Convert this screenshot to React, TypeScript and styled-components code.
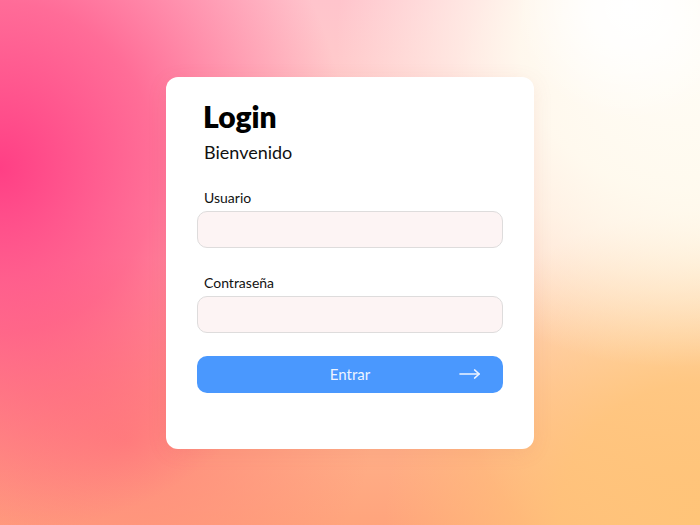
import React from 'react'
import styled, { createGlobalStyle } from 'styled-components'

const GlobalStyle = createGlobalStyle`
  html, body {
    margin: 0;
    padding: 0;
  }
  body {
    font-family: Lato, "Open Sans", sans-serif;
  }
`

export default function App() {
    return (
        <>
            <GlobalStyle />
            <Page>
                <Card>
                    <Title>Login</Title>
                    <Subtitle>Bienvenido</Subtitle>
                    <Form onSubmit={(e) => e.preventDefault()}>
                        <Field>
                            <Label htmlFor="usuario">Usuario</Label>
                            <Input id="usuario" type="text" />
                        </Field>
                        <Field>
                            <Label htmlFor="password">Contraseña</Label>
                            <Input id="password" type="password" />
                        </Field>
                        <Button type="submit">
                            <span>Entrar</span>
                            <Arrow viewBox="0 0 24 12" fill="none" stroke="currentColor" strokeWidth="1.6" strokeLinecap="round" strokeLinejoin="round">
                                <path d="M1 6h21" />
                                <path d="M17 1.5L22 6l-5 4.5" />
                            </Arrow>
                        </Button>
                    </Form>
                </Card>
            </Page>
        </>
    )
}

const Page = styled.div`
    width: 100%;
    height: 525px;
    display: flex;
    justify-content: center;
    align-items: center;
    background:
        radial-gradient(circle at 90% 1%, #ffffff 0%, rgba(255,255,255,0.8) 5%, rgba(255,255,255,0) 14%),
        radial-gradient(ellipse 48% 62% at 96% 8%, #fffdf7 0%, rgba(255,251,240,0.92) 45%, rgba(255,248,232,0) 100%),
        radial-gradient(ellipse 50% 70% at 0% 32%, #ff3f85 0%, rgba(255,70,130,0.7) 45%, rgba(255,90,130,0) 100%),
        radial-gradient(ellipse 45% 60% at 100% 100%, #ffc478 0%, rgba(255,196,120,0.85) 45%, rgba(255,196,120,0) 100%),
        radial-gradient(ellipse 35% 35% at 18% 84%, #ff8a7c 0%, rgba(255,138,124,0) 100%),
        radial-gradient(ellipse 40% 70% at 100% 45%, #fff1de 0%, rgba(255,241,222,0) 100%),
        linear-gradient(180deg, #ffc4cc 0%, #ffd6c8 40%, #ffb690 75%, #ffa47c 100%);
    overflow: hidden;
`

const Card = styled.div`
    width: 368px;
    height: 372px;
    box-sizing: border-box;
    padding: 20px 31px 0;
    background: #ffffff;
    border-radius: 12px;
    box-shadow: 0 4px 20px rgba(200, 90, 80, 0.1);
    display: flex;
    flex-direction: column;
`

const Title = styled.h1`
    margin: 0 0 0 6px;
    font-size: 30px;
    line-height: 38px;
    font-weight: 800;
    color: #000;
`

const Subtitle = styled.p`
    margin: 5px 0 0 7px;
    font-size: 18px;
    line-height: 24px;
    color: #111;
`

const Form = styled.form`
    display: flex;
    flex-direction: column;
    margin-top: 25px;
    row-gap: 26px;
`

const Field = styled.div`
    display: flex;
    flex-direction: column;
    row-gap: 4px;
`

const Label = styled.label`
    margin-left: 7px;
    font-size: 14px;
    line-height: 18px;
    color: #111;
`

const Input = styled.input`
    box-sizing: border-box;
    width: 100%;
    height: 37px;
    padding: 0 12px;
    background: #fdf4f4;
    border: 1px solid #dedcdc;
    border-radius: 10px;
    font-family: inherit;
    font-size: 14px;
    outline: none;
`

const Button = styled.button`
    position: relative;
    box-sizing: border-box;
    width: 100%;
    height: 37px;
    margin-top: -3px;
    border: none;
    border-radius: 10px;
    background: #4a98fe;
    color: #eef4ff;
    font-family: inherit;
    font-size: 15px;
    display: flex;
    justify-content: center;
    align-items: center;
    cursor: pointer;
`

const Arrow = styled.svg`
    position: absolute;
    right: 22px;
    top: 12px;
    width: 22px;
    height: 12px;
`
